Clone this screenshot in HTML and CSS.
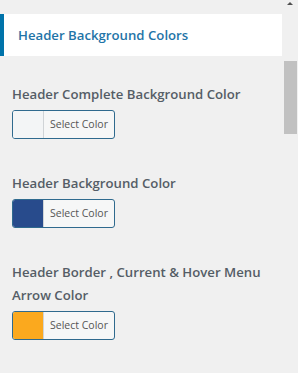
FILE: index.html
```html
<!DOCTYPE html>
<html lang="en">
<head>
    <meta charset="UTF-8">
    <meta name="viewport" content="width=device-width, initial-scale=1.0">
    <title>Header Background Colors</title>
    <link rel="stylesheet" href="styles.css">
</head>
<body>

<div class="page">
    <div class="content">
        <h3 class="section-title">Header Background Colors</h3>

        <div class="control">
            <label class="control-label">Header Complete Background Color</label>
            <button class="color-btn"><span class="swatch swatch-light"></span><span class="btn-text">Select Color</span></button>
        </div>

        <div class="control">
            <label class="control-label">Header Background Color</label>
            <button class="color-btn"><span class="swatch swatch-blue"></span><span class="btn-text">Select Color</span></button>
        </div>

        <div class="control">
            <label class="control-label">Header Border , Current &amp; Hover Menu Arrow Color</label>
            <button class="color-btn"><span class="swatch swatch-orange"></span><span class="btn-text">Select Color</span></button>
        </div>
    </div>

    <div class="scrollbar">
        <span class="arrow-up"></span>
        <span class="thumb"></span>
    </div>
</div>

</body>
</html>
```

FILE: styles.css
```css
body { margin: 0; background: #f0f0f0; font-family: "Open Sans", "Noto Sans", sans-serif; }
.page { display: flex; height: 373px; overflow: hidden; }
.content { width: 282px; padding-top: 14px; }

.section-title { margin: 0; height: 42px; line-height: 42px; background: #fff; border-left: 4px solid #0073aa; padding-left: 14px; font-size: 13.2px; font-weight: 600; color: #1f74a7; }

.control { padding: 0 12px; }
.control:first-of-type { margin-top: 27px; }
.control + .control { margin-top: 33px; }
.control-label { display: block; font-size: 13.2px; font-weight: 600; line-height: 23px; color: #555d66; margin-bottom: 4px; }

.color-btn { display: flex; width: 103px; height: 29px; padding: 0; border: 1px solid #2f6a8e; border-radius: 3px; overflow: hidden; background: #f6f7f7; cursor: pointer; font-family: inherit; }
.swatch { width: 30px; height: 100%; border-right: 1px solid #d0d4d7; }
.swatch-light { background: #f3f5f6; }
.swatch-blue { background: #284b8c; }
.swatch-orange { background: #fba91e; }
.btn-text { flex: 1; line-height: 27px; font-size: 10.5px; color: #555; text-align: center; }

.scrollbar { width: 16px; display: flex; flex-direction: column; align-items: center; }
.arrow-up { margin-top: 2px; width: 0; height: 0; border-left: 3px solid transparent; border-right: 3px solid transparent; border-bottom: 3px solid #505050; }
.thumb { margin-top: 56px; width: 13px; height: 73px; background: #c1c1c1; }
```
